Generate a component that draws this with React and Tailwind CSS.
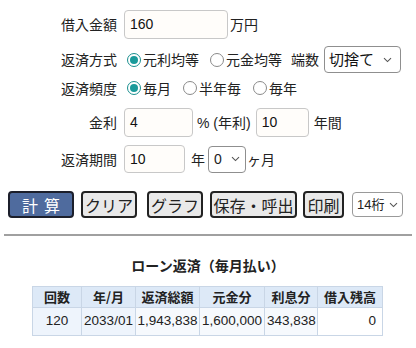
import React from "react";

const F = { fontFamily: '"Noto Sans CJK JP", "Liberation Sans", sans-serif' };
const A = { fontFamily: '"Liberation Sans", "Noto Sans CJK JP", sans-serif' };

function Radio({ checked, label }) {
  return (
    <span className="flex items-center">
      <span
        className={
          "w-[14px] h-[14px] rounded-full border flex items-center justify-center bg-white " +
          (checked ? "border-[#1a8f8f]" : "border-[#8a8a8a]")
        }
      >
        {checked && <span className="w-[8px] h-[8px] rounded-full bg-[#1a9a9a]" />}
      </span>
      <span className="ml-[2px]">{label}</span>
    </span>
  );
}

function Chevron() {
  return (
    <svg width="9" height="6" viewBox="0 0 9 6" className="shrink-0">
      <path d="M1 1.2 L4.5 4.6 L8 1.2" fill="none" stroke="#555" strokeWidth="1.1" />
    </svg>
  );
}

function Input({ value, w }) {
  return (
    <div
      className={"h-[29px] border border-[#c8c8c8] rounded-[4px] bg-[#fffdfa] flex items-center pl-[5px] text-[14px] text-[#111] " + w}
      style={A}
    >
      {value}
    </div>
  );
}

export default function App() {
  return (
    <div className="w-[416px] h-[348px] bg-white text-[#222] text-[14px] relative overflow-hidden" style={F}>
      {/* row 1 */}
      <div className="flex items-center mt-[10px] h-[29px]">
        <div className="w-[117px] text-right">借入金額</div>
        <div className="ml-[7px]"><Input value="160" w="w-[104px]" /></div>
        <div className="ml-[2px]">万円</div>
      </div>
      {/* row 2 */}
      <div className="flex items-center mt-[7px] h-[27px]">
        <div className="w-[117px] text-right">返済方式</div>
        <div className="ml-[10px]"><Radio checked label="元利均等" /></div>
        <div className="ml-[11px]"><Radio label="元金均等" /></div>
        <div className="ml-[9px]">端数</div>
        <div className="ml-[5px] w-[77px] h-[27px] border border-[#8f8f8f] rounded-[4px] flex items-center justify-between pl-[4px] pr-[8px] text-[15px] text-[#111]">
          <span>切捨て</span>
          <Chevron />
        </div>
      </div>
      {/* row 3 */}
      <div className="flex items-center mt-[5px] h-[20px]">
        <div className="w-[117px] text-right">返済頻度</div>
        <div className="ml-[10px]"><Radio checked label="毎月" /></div>
        <div className="ml-[12px]"><Radio label="半年毎" /></div>
        <div className="ml-[12px]"><Radio label="毎年" /></div>
      </div>
      {/* row 4 */}
      <div className="flex items-center mt-[10px] h-[29px]">
        <div className="w-[117px] text-right">金利</div>
        <div className="ml-[7px]"><Input value="4" w="w-[69px]" /></div>
        <div className="ml-[4px] text-[14px]"><span style={A}>% (</span>年利<span style={A}>)</span></div>
        <div className="ml-[5px]"><Input value="10" w="w-[53px]" /></div>
        <div className="ml-[5px]">年間</div>
      </div>
      {/* row 5 */}
      <div className="flex items-center mt-[8px] h-[28px]">
        <div className="w-[117px] text-right">返済期間</div>
        <div className="ml-[7px]"><Input value="10" w="w-[61px] !h-[28px]" /></div>
        <div className="ml-[6px]">年</div>
        <div className="ml-[3px] w-[38px] h-[27px] border border-[#8f8f8f] rounded-[4px] flex items-center justify-between pl-[5px] pr-[5px] text-[14px]" style={A}>
          <span>0</span>
          <Chevron />
        </div>
        <div className="ml-[1px]">ヶ月</div>
      </div>
      {/* buttons */}
      <div className="flex items-center mt-[18px] h-[27px] text-[16px]">
        <div className="ml-[8px] w-[66px] h-[27px] bg-[#4f6b9e] border-2 border-[#1c1f2b] rounded-[4px] text-white flex items-center justify-center tracking-[6px] pl-[6px]">計算</div>
        <div className="ml-[7px] w-[56px] h-[27px] bg-[#e9e9e9] border-2 border-[#222] rounded-[4px] flex items-center justify-center">クリア</div>
        <div className="ml-[10px] w-[56px] h-[27px] bg-[#e9e9e9] border-2 border-[#222] rounded-[4px] flex items-center justify-center">グラフ</div>
        <div className="ml-[7px] w-[87px] h-[27px] bg-[#e9e9e9] border-2 border-[#222] rounded-[4px] flex items-center justify-center">保存・呼出</div>
        <div className="ml-[6px] w-[41px] h-[27px] bg-[#e9e9e9] border-2 border-[#222] rounded-[4px] flex items-center justify-center">印刷</div>
        <div className="ml-[8px] w-[51px] h-[25px] border border-[#9a9a9a] rounded-[4px] flex items-center justify-between pl-[4px] pr-[4px] text-[13px]">
          <span><span style={A}>14</span>桁</span>
          <Chevron />
        </div>
      </div>
      {/* divider */}
      <div className="mx-[4px] mt-[16px] h-[2px] bg-[#a0a0a0]" />
      {/* title */}
      <div className="mt-[20px] text-center font-bold text-[14px] leading-[18px]">ローン返済（毎月払い）</div>
      {/* table */}
      <table className="ml-[32px] mt-[12px] border-collapse table-fixed w-[350px] text-[13.5px] whitespace-nowrap" style={A}>
        <colgroup>
          <col style={{ width: 49 }} />
          <col style={{ width: 54 }} />
          <col style={{ width: 64 }} />
          <col style={{ width: 65 }} />
          <col style={{ width: 53 }} />
          <col style={{ width: 65 }} />
        </colgroup>
        <thead>
          <tr className="h-[21px] bg-[#dde9f7]">
            {["回数", "年/月", "返済総額", "元金分", "利息分", "借入残高"].map((t) => (
              <th key={t} style={F} className="border border-[#c9d6e6] font-bold text-[13px] text-center p-0 text-[#222]">{t}</th>
            ))}
          </tr>
        </thead>
        <tbody>
          <tr className="h-[28px]">
            <td className="border border-[#c9d6e6] bg-[#eef4fc] text-center p-0">120</td>
            <td className="border border-[#c9d6e6] bg-[#eef4fc] text-center p-0">2033/01</td>
            <td className="border border-[#c9d6e6] bg-[#f6f9fd] text-center p-0">1,943,838</td>
            <td className="border border-[#c9d6e6] bg-[#f6f9fd] text-center p-0">1,600,000</td>
            <td className="border border-[#c9d6e6] bg-[#f6f9fd] text-left pl-[2px] p-0">343,838</td>
            <td className="border border-[#c9d6e6] bg-white text-right pr-[6px] p-0">0</td>
          </tr>
        </tbody>
      </table>
    </div>
  );
}
